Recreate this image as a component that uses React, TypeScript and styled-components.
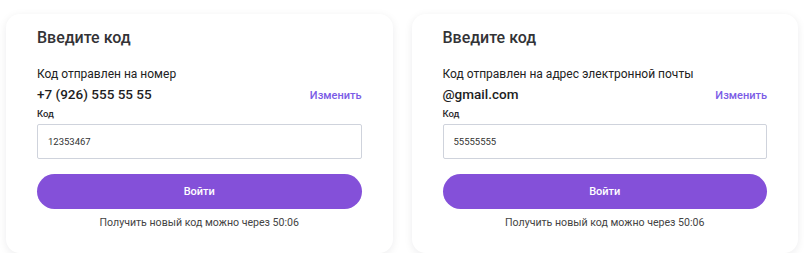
import React from 'react';
import styled, { createGlobalStyle } from 'styled-components';

const GlobalStyle = createGlobalStyle`
  * { box-sizing: border-box; }
  body {
    margin: 0;
    background: #ffffff;
    font-family: Roboto, "Liberation Sans", sans-serif;
    color: #222;
  }
`;

const Page = styled.div`
  display: flex;
  gap: 19px;
  padding: 14px 6px 0 6px;
`;

const Card = styled.div`
  width: 387px;
  height: 239px;
  background: #fff;
  border-radius: 14px;
  box-shadow: 0 2px 8px rgba(20, 20, 40, 0.08);
  padding: 14px 31px 0 31px;
  display: flex;
  flex-direction: column;
`;

const Title = styled.h2`
  margin: 0;
  font-size: 16px;
  line-height: 20px;
  font-weight: 500;
  color: #333336;
`;

const SentTo = styled.p`
  margin: 19px 0 0 0;
  font-size: 12px;
  line-height: 15px;
  color: #222;
`;

const ContactRow = styled.div`
  display: flex;
  align-items: baseline;
  justify-content: space-between;
  margin-top: 3px;
`;

const Contact = styled.span`
  font-size: 13.5px;
  line-height: 18px;
  font-weight: 500;
  color: #1d1d22;
`;

const ChangeLink = styled.a`
  font-size: 11px;
  font-weight: 500;
  color: #7b5ce6;
  text-decoration: none;
  cursor: pointer;
`;

const Label = styled.label`
  margin-top: 5px;
  font-size: 9.5px;
  line-height: 12px;
  font-weight: 500;
  color: #2a2a2e;
`;

const Input = styled.input`
  margin-top: 4px;
  height: 35px;
  width: 100%;
  border: 1px solid #cfd3dc;
  border-radius: 2px;
  padding: 0 10px;
  font-family: Roboto, "Liberation Sans", sans-serif;
  font-size: 9.5px;
  color: #333;
  outline: none;
`;

const SubmitButton = styled.button`
  margin-top: 15px;
  height: 35px;
  width: 100%;
  border: none;
  border-radius: 18px;
  background: #8450d9;
  color: #fff;
  font-family: Roboto, "Liberation Sans", sans-serif;
  font-size: 11px;
  font-weight: 500;
  cursor: pointer;
`;

const Resend = styled.p`
  margin: 7px 0 0 0;
  text-align: center;
  font-size: 10.6px;
  line-height: 13px;
  color: #444;
`;

interface CodeCardProps {
  sentTo: string;
  contact: string;
  code: string;
}

const CodeCard: React.FC<CodeCardProps> = ({ sentTo, contact, code }) => (
  <Card>
    <Title>Введите код</Title>
    <SentTo>{sentTo}</SentTo>
    <ContactRow>
      <Contact>{contact}</Contact>
      <ChangeLink>Изменить</ChangeLink>
    </ContactRow>
    <Label>Код</Label>
    <Input defaultValue={code} />
    <SubmitButton type="button">Войти</SubmitButton>
    <Resend>Получить новый код можно через 50:06</Resend>
  </Card>
);

export default function App() {
  return (
    <>
      <GlobalStyle />
      <Page>
        <CodeCard sentTo="Код отправлен на номер" contact="+7 (926) 555 55 55" code="12353467" />
        <CodeCard sentTo="Код отправлен на адрес электронной почты" contact="@gmail.com" code="55555555" />
      </Page>
    </>
  );
}
